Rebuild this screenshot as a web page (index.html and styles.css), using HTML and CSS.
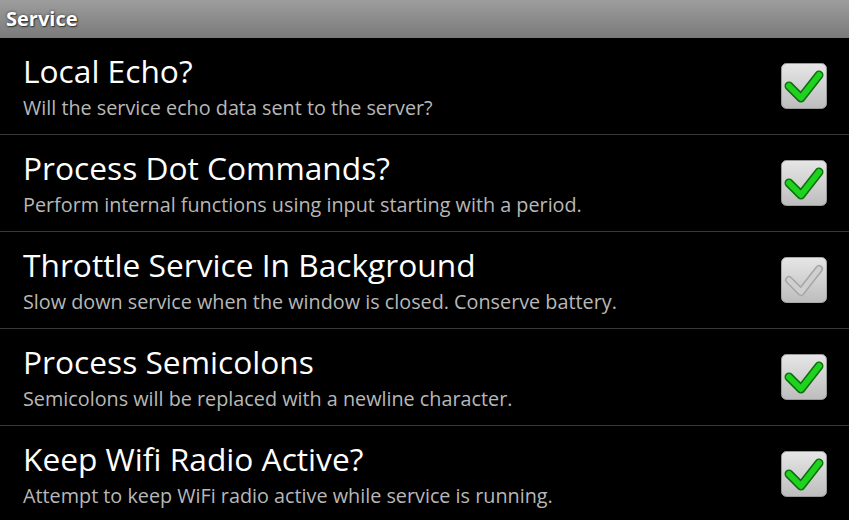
FILE: index.html
```html
<!DOCTYPE html>
<html>
<head>
<meta charset="utf-8">
<link rel="stylesheet" href="styles.css">
</head>
<body>
<div class="titlebar">Service</div>
<div class="list">
  <div class="row">
    <div class="text">
      <div class="title">Local Echo?</div>
      <div class="summary">Will the service echo data sent to the server?</div>
    </div>
    <div class="check">
      <svg width="46" height="46" viewBox="0 0 46 46"><defs><linearGradient id="g" x1="0" y1="0" x2="0" y2="1"><stop offset="0" stop-color="#e6e6e6"/><stop offset="1" stop-color="#bdbdbd"/></linearGradient></defs><rect x="0.5" y="0.5" width="45" height="45" rx="5" fill="url(#g)" stroke="#9a9a9a"/><path d="M8 23 L20 35 L38 12" fill="none" stroke="#0b6e0b" stroke-width="9" stroke-linecap="round" stroke-linejoin="round"/><path d="M8 23 L20 35 L38 12" fill="none" stroke="#1fd21f" stroke-width="6" stroke-linecap="round" stroke-linejoin="round"/></svg>
    </div>
  </div>
  <div class="row">
    <div class="text">
      <div class="title">Process Dot Commands?</div>
      <div class="summary">Perform internal functions using input starting with a period.</div>
    </div>
    <div class="check">
      <svg width="46" height="46" viewBox="0 0 46 46"><rect x="0.5" y="0.5" width="45" height="45" rx="5" fill="url(#g)" stroke="#9a9a9a"/><path d="M8 23 L20 35 L38 12" fill="none" stroke="#0b6e0b" stroke-width="9" stroke-linecap="round" stroke-linejoin="round"/><path d="M8 23 L20 35 L38 12" fill="none" stroke="#1fd21f" stroke-width="6" stroke-linecap="round" stroke-linejoin="round"/></svg>
    </div>
  </div>
  <div class="row">
    <div class="text">
      <div class="title">Throttle Service In Background</div>
      <div class="summary">Slow down service when the window is closed. Conserve battery.</div>
    </div>
    <div class="check">
      <svg width="46" height="46" viewBox="0 0 46 46"><rect x="0.5" y="0.5" width="45" height="45" rx="5" fill="url(#g)" stroke="#a8a8a8"/><path d="M8 23 L20 35 L38 12" fill="none" stroke="#a6a6a6" stroke-width="8" stroke-linecap="round" stroke-linejoin="round"/><path d="M8 23 L20 35 L38 12" fill="none" stroke="#cfcfcf" stroke-width="5" stroke-linecap="round" stroke-linejoin="round"/></svg>
    </div>
  </div>
  <div class="row">
    <div class="text">
      <div class="title">Process Semicolons</div>
      <div class="summary">Semicolons will be replaced with a newline character.</div>
    </div>
    <div class="check">
      <svg width="46" height="46" viewBox="0 0 46 46"><rect x="0.5" y="0.5" width="45" height="45" rx="5" fill="url(#g)" stroke="#9a9a9a"/><path d="M8 23 L20 35 L38 12" fill="none" stroke="#0b6e0b" stroke-width="9" stroke-linecap="round" stroke-linejoin="round"/><path d="M8 23 L20 35 L38 12" fill="none" stroke="#1fd21f" stroke-width="6" stroke-linecap="round" stroke-linejoin="round"/></svg>
    </div>
  </div>
  <div class="row">
    <div class="text">
      <div class="title">Keep Wifi Radio Active?</div>
      <div class="summary">Attempt to keep WiFi radio active while service is running.</div>
    </div>
    <div class="check">
      <svg width="46" height="46" viewBox="0 0 46 46"><rect x="0.5" y="0.5" width="45" height="45" rx="5" fill="url(#g)" stroke="#9a9a9a"/><path d="M8 23 L20 35 L38 12" fill="none" stroke="#0b6e0b" stroke-width="9" stroke-linecap="round" stroke-linejoin="round"/><path d="M8 23 L20 35 L38 12" fill="none" stroke="#1fd21f" stroke-width="6" stroke-linecap="round" stroke-linejoin="round"/></svg>
    </div>
  </div>
</div>
</body>
</html>
```
FILE: styles.css
```css
html, body {
  margin: 0;
  padding: 0;
  background: #000;
  font-family: "Open Sans", "DejaVu Sans", sans-serif;
  overflow: hidden;
}
.titlebar {
  height: 38px;
  box-sizing: border-box;
  background: linear-gradient(#9d9d9d, #7a7a7a);
  color: #fff;
  font-weight: bold;
  font-size: 20px;
  line-height: 38px;
  padding-left: 6px;
  text-shadow: 0 0 3px rgba(0,0,0,0.6), 1px 1px 1px rgba(0,0,0,0.5);
}
.row {
  height: 96px;
  border-bottom: 1px solid #383838;
  display: flex;
  align-items: center;
  padding-left: 23px;
  padding-right: 22px;
}
.text {
  flex: 1;
  margin-top: -1px;
}
.title {
  color: #fff;
  font-size: 31.7px;
  line-height: 40px;
}
.summary {
  color: #b8b8b8;
  font-size: 19.8px;
  line-height: 26px;
  margin-top: 4px;
}
.check {
  width: 46px;
  height: 46px;
}
.check svg {
  display: block;
}
```
